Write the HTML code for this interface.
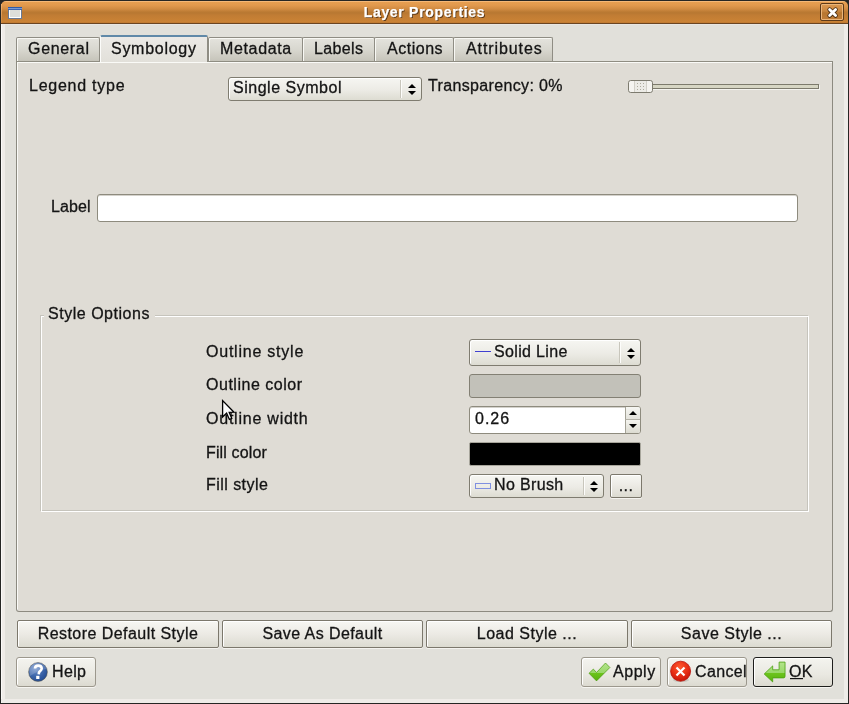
<!DOCTYPE html>
<html><head><meta charset="utf-8">
<style>
*{box-sizing:border-box}
html,body{margin:0;padding:0}
body{width:849px;height:704px;overflow:hidden;position:relative;background:#262624;font-family:"Liberation Sans",sans-serif;font-size:16px;color:#141414;letter-spacing:0.35px}
.a{position:absolute}
.t{position:absolute;white-space:nowrap;line-height:18px;height:18px;will-change:transform;-webkit-text-stroke:0.3px #141414}
/* window frame */
#fl{left:0;top:5px;width:1px;height:699px;background:#2a2a28}
#fr{left:848px;top:5px;width:1px;height:699px;background:#2a2a28}
#fb{left:0;top:703px;width:849px;height:1px;background:#2a2a28}
#sl{left:1px;top:24px;width:4px;height:679px;background:#efece8;border-left:1px solid #fbfaf8}
#sr{left:844px;top:24px;width:4px;height:679px;background:#eeece8}
#sb{left:1px;top:699px;width:847px;height:4px;background:#efece8;border-radius:0 0 2px 3px}
#win{left:1px;top:6px;width:847px;height:697px;background:#e1e0da;border-radius:0 0 2px 2px}
#title{left:1px;top:1px;width:847px;height:24px;border-radius:5px 5px 0 0;background:linear-gradient(to bottom,#f4b878 0px,#f4b878 1px,#e69e50 1px,#e29a4e 4px,#d08b42 8px,#bb7a33 11px,#b87832 12px,#c07c34 14px,#cb8335 21px,#b8742e 22px,#6b4521 22px,#6b4521 23px,#e8e6e2 23px,#e8e6e2 24px)}
#ttl{left:0;width:849px;top:3px;text-align:center;color:#fff;font-weight:bold;font-size:14px;letter-spacing:0.7px;text-shadow:1px 1px 0 #5a3818;-webkit-text-stroke:0.25px #fff}
#wicon{left:8px;top:7px;width:14px;height:12px;border:1px solid #6a7a94;background:#dedfda;box-shadow:inset 0 0 0 1px #fff}
#wicon:before{content:"";position:absolute;left:-1px;top:-1px;right:-1px;height:3px;background:linear-gradient(#2e5aa8 0,#2e5aa8 1px,#7a9ad0 1px,#7a9ad0 2px,#3a64b0 2px)}
#close{left:820px;top:3px;width:24px;height:18px;border:1px solid #5e3a18;border-radius:2px;box-shadow:inset 0 0 0 1px #eab57a;background:linear-gradient(#dc9850,#c88640 45%,#b67630 55%,#c27e38)}
/* tabs */
.tab{position:absolute;top:37px;height:24px;border:1px solid #8f8d84;border-bottom:none;border-radius:2px 2px 0 0;background:linear-gradient(#e4e3dd,#d8d7cf 50%,#c6c4ba);box-shadow:inset 1px 1px 0 #f8f8f4}
.tab.sel{top:35px;height:27px;background:linear-gradient(#eceae6,#e2e0da);border-top:2px solid #6089a8;border-left-color:#fcfcfa;z-index:2;box-shadow:none}
#pane{left:16px;top:61px;width:817px;height:551px;border-radius:0 0 3px 3px;border:1px solid #8c8a80;border-top-color:#8f8d82;background:#dfdcd5;box-shadow:inset 1px 1px 0 #fafaf7}
/* buttons */
.btn{position:absolute;border:1px solid #7c786c;border-radius:2px;background:linear-gradient(#f7f7f3,#eceae4 50%,#dcdbd1);box-shadow:inset 1px 1px 0 #fff,0 1px 0 #f4f3ef;text-align:center}
.btn2{position:absolute;border:1px solid #9c988d;border-radius:3px;background:linear-gradient(#f4f4ef,#e9e8e1 60%,#dcdad0);box-shadow:inset 1px 1px 0 #fff,0 1px 0 #f6f5f1}
.combo{position:absolute;border:1px solid #7f7c70;border-radius:3px;background:linear-gradient(#f6f6f2,#ecebe5 55%,#dddcd2);box-shadow:inset 1px 1px 0 #fff}
.sep{position:absolute;width:2px;border-left:1px solid #c8c6bc;border-right:1px solid #fdfdfb}
.arr{position:absolute;width:0;height:0;border-left:4px solid transparent;border-right:4px solid transparent}
.up{border-bottom:4px solid #000}
.dn{border-top:4px solid #000}
.edit{position:absolute;border:1px solid #8e8b7e;border-radius:3px;background:#fff;box-shadow:inset 0 1px 0 #d4d2cc}
/* groupbox */
#gd{left:40px;top:315px;width:768px;height:196px;border:1px solid #c6c4bc}
#gl{left:41px;top:316px;width:768px;height:196px;border:1px solid #fff}
#gmask{left:44px;top:305px;width:111px;height:14px;background:#dfdcd5}
</style></head><body>
<div class="a" id="win"></div><div class="a" id="title"></div><div class="a" style="left:1px;top:4px;width:1px;height:19px;background:linear-gradient(#f0b070,#d08a40)"></div>
<div class="a" id="wicon"></div>
<div class="t" id="ttl">Layer Properties</div>
<div class="a" id="close"><svg width="22" height="16" style="position:absolute;left:0;top:0"><path d="M8.6 5.6 L14.6 11.6 M14.6 5.6 L8.6 11.6" stroke="#4a2c10" stroke-width="4.4" stroke-linecap="round"/><path d="M8.6 5.6 L14.6 11.6 M14.6 5.6 L8.6 11.6" stroke="#fff" stroke-width="2.8" stroke-linecap="round"/></svg></div>
<div class="a" id="sl"></div><div class="a" id="sr"></div><div class="a" id="sb"></div>


<div class="a" id="pane"></div>
<div class="tab" style="left:16px;width:84px"></div>
<div class="tab sel" style="left:100px;width:108px"></div>
<div class="tab" style="left:208px;width:95px"></div>
<div class="tab" style="left:302px;width:73px"></div>
<div class="tab" style="left:374px;width:80px"></div>
<div class="tab" style="left:453px;width:100px"></div>
<div class="t" style="left:28px;top:40px;z-index:3;letter-spacing:0.68px">General</div>
<div class="t" style="left:111px;top:40px;z-index:3;letter-spacing:0.72px">Symbology</div>
<div class="t" style="left:220px;top:40px;z-index:3;letter-spacing:0.64px">Metadata</div>
<div class="t" style="left:314px;top:40px;z-index:3">Labels</div>
<div class="t" style="left:387px;top:40px;z-index:3;letter-spacing:0.52px">Actions</div>
<div class="t" style="left:466px;top:40px;z-index:3;letter-spacing:0.9px">Attributes</div>

<!-- legend row -->
<div class="t" style="left:29px;top:77px;letter-spacing:0.75px">Legend type</div>
<div class="combo" style="left:228px;top:77px;width:194px;height:24px"></div>
<div class="sep" style="left:400px;top:80px;height:18px"></div>
<div class="arr up" style="left:408px;top:84px"></div>
<div class="arr dn" style="left:408px;top:91px"></div>
<div class="t" style="left:233px;top:79px;letter-spacing:0.52px">Single Symbol</div>
<div class="t" style="left:428px;top:77px">Transparency: 0%</div>
<div class="a" style="left:640px;top:84px;width:179px;height:5px;border:1px solid #7c7a6c;background:#d6d5c3;box-shadow:1px 1px 0 #f4f3ef"></div>
<svg class="a" style="left:626px;top:78px" width="30" height="18"><rect x="2.5" y="2.5" width="24" height="12" rx="2.2" fill="#f5f4f0" stroke="#7d7b6f"/><rect x="9" y="3" width="11" height="11" fill="#ecebe6"/><path d="M8.5 3 V14 M20.5 3 V14" stroke="#d2d0c8"/><g fill="#aeac9e"><rect x="11" y="5" width="1" height="1"/><rect x="14" y="5" width="1" height="1"/><rect x="17" y="5" width="1" height="1"/><rect x="11" y="8" width="1" height="1"/><rect x="14" y="8" width="1" height="1"/><rect x="17" y="8" width="1" height="1"/><rect x="11" y="11" width="1" height="1"/><rect x="14" y="11" width="1" height="1"/><rect x="17" y="11" width="1" height="1"/></g></svg>

<!-- label row -->
<div class="t" style="left:51px;top:198px;letter-spacing:0.1px">Label</div>
<div class="edit" style="left:97px;top:194px;width:701px;height:28px"></div>

<!-- group box -->
<div class="a" id="gd"></div><div class="a" id="gl"></div>
<div class="a" id="gmask"></div>
<div class="t" style="left:48px;top:305px;letter-spacing:0.52px">Style Options</div>

<div class="t" style="left:206px;top:343px;letter-spacing:0.77px">Outline style</div>
<div class="t" style="left:206px;top:376px;letter-spacing:0.52px">Outline color</div>
<div class="t" style="left:206px;top:410px;letter-spacing:0.77px">Outline width</div>
<div class="t" style="left:206px;top:444px;letter-spacing:0.13px">Fill color</div>
<div class="t" style="left:206px;top:476px;letter-spacing:0.45px">Fill style</div>

<div class="combo" style="left:469px;top:339px;width:172px;height:27px"></div>
<div class="a" style="left:475px;top:351px;width:16px;height:1px;background:#4040d0"></div>
<div class="t" style="left:494px;top:343px">Solid Line</div>
<div class="sep" style="left:619px;top:342px;height:21px"></div>
<div class="arr up" style="left:627px;top:348px"></div>
<div class="arr dn" style="left:627px;top:355px"></div>

<div class="a" style="left:469px;top:374px;width:172px;height:24px;border:1px solid #838074;border-radius:3px;background:#c2c1b9"></div>

<div class="edit" style="left:469px;top:406px;width:172px;height:28px"></div>
<div class="t" style="left:475px;top:410px;letter-spacing:1px">0.26</div>
<div class="a" style="left:625px;top:407px;width:15px;height:13px;border-left:1px solid #a4a296;border-bottom:1px solid #b4b2a8;border-radius:0 2px 0 0;background:linear-gradient(#f6f6f2,#e4e3dc)"></div>
<div class="a" style="left:625px;top:420px;width:15px;height:13px;border-left:1px solid #a4a296;border-radius:0 0 2px 0;background:linear-gradient(#f4f4ef,#dcdbd1)"></div>
<div class="arr up" style="left:629px;top:411px"></div>
<div class="arr dn" style="left:629px;top:424px"></div>

<div class="a" style="left:469px;top:442px;width:172px;height:24px;border:1px solid #a8a69c;border-radius:2px;background:#000"></div>

<div class="combo" style="left:469px;top:474px;width:135px;height:24px"></div>
<div class="a" style="left:475px;top:483px;width:16px;height:6px;border:1px solid #8090e0"></div>
<div class="t" style="left:494px;top:476px">No Brush</div>
<div class="sep" style="left:583px;top:477px;height:18px"></div>
<div class="arr up" style="left:590px;top:481px"></div>
<div class="arr dn" style="left:590px;top:488px"></div>
<div class="btn" style="left:610px;top:474px;width:32px;height:24px"><span class="t" style="left:0;right:0;top:2px">...</span></div>

<!-- bottom buttons -->
<div class="btn" style="left:17px;top:620px;width:202px;height:28px"></div>
<div class="btn" style="left:222px;top:620px;width:201px;height:28px"></div>
<div class="btn" style="left:426px;top:620px;width:202px;height:28px"></div>
<div class="btn" style="left:631px;top:620px;width:201px;height:28px"></div>
<div class="t" style="left:17px;width:202px;text-align:center;top:625px;letter-spacing:0.45px">Restore Default Style</div>
<div class="t" style="left:222px;width:201px;text-align:center;top:625px;letter-spacing:0.42px">Save As Default</div>
<div class="t" style="left:426px;width:202px;text-align:center;top:625px;letter-spacing:0.5px">Load Style ...</div>
<div class="t" style="left:631px;width:201px;text-align:center;top:625px;letter-spacing:0.5px">Save Style ...</div>

<div class="btn2" style="left:16px;top:657px;width:80px;height:30px"></div>
<div class="btn2" style="left:581px;top:657px;width:80px;height:30px"></div>
<div class="btn2" style="left:667px;top:657px;width:80px;height:30px"></div>
<div class="btn2" style="left:753px;top:657px;width:80px;height:30px;border-color:#1e1e1c"></div>
<div class="t" style="left:52px;top:663px">Help</div>
<div class="t" style="left:613px;top:663px;letter-spacing:0.55px">Apply</div>
<div class="t" style="left:695px;top:663px">Cancel</div>
<div class="t" style="left:789px;top:663px">OK</div>

<svg class="a" style="left:0;top:0;z-index:5" width="849" height="704">
<defs>
<radialGradient id="gh" cx="0.35" cy="0.3" r="0.8"><stop offset="0" stop-color="#7a9ad0"/><stop offset="0.5" stop-color="#3f68ac"/><stop offset="1" stop-color="#1f4890"/></radialGradient>
<radialGradient id="gr" cx="0.45" cy="0.3" r="0.75"><stop offset="0" stop-color="#ff5a30"/><stop offset="0.6" stop-color="#e42a12"/><stop offset="1" stop-color="#c01208"/></radialGradient>
<linearGradient id="gg" x1="0" y1="0" x2="0" y2="1"><stop offset="0" stop-color="#b4e48c"/><stop offset="0.55" stop-color="#98d868"/><stop offset="0.56" stop-color="#6cc41c"/><stop offset="1" stop-color="#58b010"/></linearGradient>
</defs>
<!-- help -->
<circle cx="38" cy="672" r="9.4" fill="url(#gh)" stroke="#4d4a3c" stroke-opacity="0.6" stroke-width="0.8"/>
<path d="M35 668.6 C35 666.3 36.6 665.6 38.2 665.6 C40.2 665.6 41.7 666.6 41.7 668.6 C41.7 670.6 39.6 671 38.9 672.6 L38.8 674.4" fill="none" stroke="#fff" stroke-width="2.6"/>
<rect x="36.2" y="675.8" width="3.2" height="3.2" fill="#fff"/>
<!-- apply -->
<polygon points="589,673.3 593.35,669.1 596.5,672.5 605.5,663 609.9,667.5 596.5,680.9" fill="url(#gg)" stroke="#4a9a10" stroke-width="0.7" stroke-linejoin="round"/>
<!-- cancel -->
<ellipse cx="681" cy="680" rx="8" ry="2" fill="#000" opacity="0.12"/>
<circle cx="680.6" cy="671.2" r="10" fill="url(#gr)" stroke="#b81008" stroke-width="0.8"/>
<path d="M676.5 667.5 L684.5 675.5 M684.5 667.5 L676.5 675.5" stroke="#fff" stroke-width="2.2"/>
<!-- ok -->
<path d="M764.2 674 L772.7 665.9 L772.7 669.8 L779.1 669.8 L779.1 662.1 L785.05 662.1 L785.05 676.4 Q785.05 677.9 783.5 677.9 L772.7 677.9 L772.7 681.9 Z" fill="url(#gg)" stroke="#4aa010" stroke-width="0.8" stroke-linejoin="round"/>
<rect x="790" y="678" width="13" height="1.2" fill="#141414"/>
<!-- cursor -->
<path d="M222.6 400.6 L222.6 417 L226.6 413.2 L229.4 419.4 L231.8 418.4 L229.2 412.4 L234 412.2 Z" fill="#fafafa" stroke="#000" stroke-width="1.3" stroke-linejoin="miter"/>
<!-- help gloss -->
<path d="M29.2 670 A9 9 0 0 1 46.6 669 C42 669.5 36 672 30 676 Z" fill="#fff" opacity="0.18"/>
</svg>
</body></html>
